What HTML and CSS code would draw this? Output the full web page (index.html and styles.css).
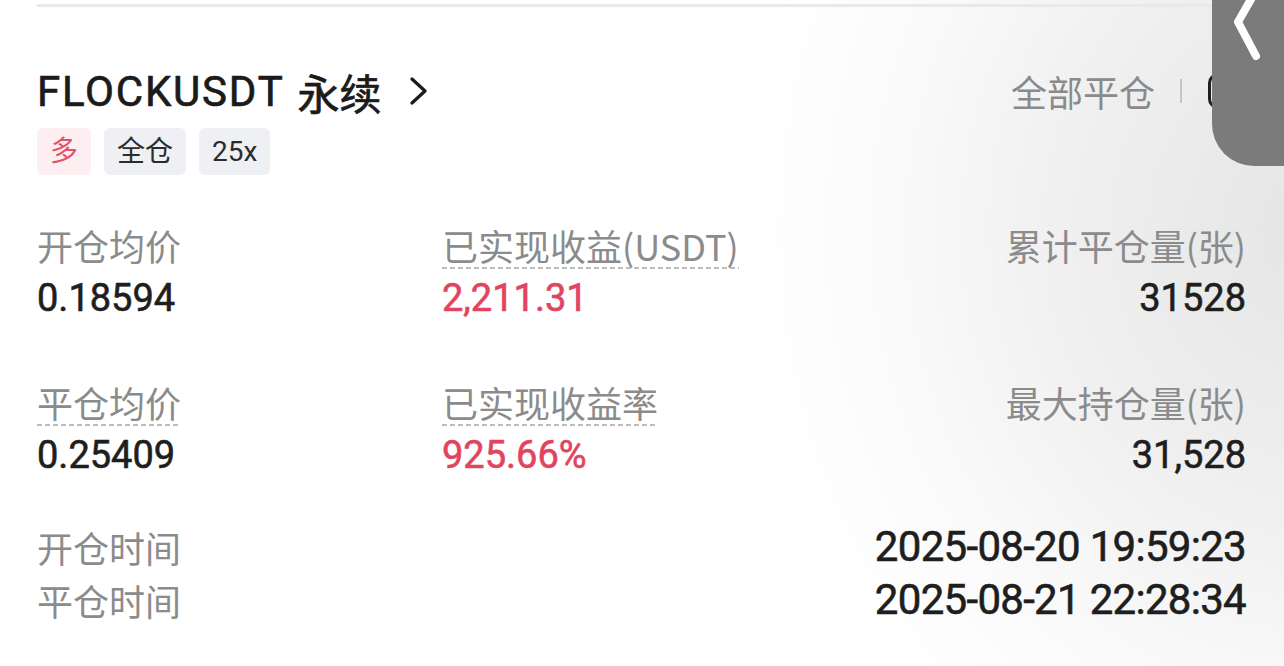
FILE: index.html
```html
<!DOCTYPE html>
<html>
<head>
    <title>FLOCKUSDT 永续</title>
    <meta charset="UTF-8">
    <meta name="viewport" content="width=device-width, initial-scale=1.0">
    <link rel="stylesheet" href="styles.css">
</head>
<body>
    <div class="back-tab">
        <svg width="72" height="70" viewBox="0 0 72 70">
            <polyline points="42,-6 26,22 44,56" fill="none" stroke="#fff" stroke-width="8" stroke-linecap="round" stroke-linejoin="round"/>
        </svg>
    </div>

    <main class="card">
        <div class="topline"></div>

        <header class="head">
            <div class="title">
                <span class="symbol">FLOCKUSDT</span>
                <span class="kind">永续</span>
                <svg class="arrow" width="22" height="28" viewBox="0 0 22 28">
                    <polyline points="4,2 17,14 4,26" fill="none" stroke="#1b1b1b" stroke-width="3.2" stroke-linecap="round" stroke-linejoin="round"/>
                </svg>
            </div>
            <div class="actions">
                <span class="close-all">全部平仓</span>
                <span class="sep"></span>
                <span class="share"></span>
            </div>
        </header>

        <div class="tags">
            <span class="tag tag-long">多</span>
            <span class="tag">全仓</span>
            <span class="tag">25x</span>
        </div>

        <section class="stats">
            <div class="stat">
                <span class="label">开仓均价</span>
                <span class="value">0.18594</span>
            </div>
            <div class="stat mid">
                <span class="label"><span class="dotted">已实现收益(USDT)</span></span>
                <span class="value red">2,211.31</span>
            </div>
            <div class="stat right">
                <span class="label">累计平仓量(张)</span>
                <span class="value">31528</span>
            </div>

            <div class="stat">
                <span class="label"><span class="dotted">平仓均价</span></span>
                <span class="value">0.25409</span>
            </div>
            <div class="stat mid">
                <span class="label"><span class="dotted">已实现收益率</span></span>
                <span class="value red">925.66%</span>
            </div>
            <div class="stat right">
                <span class="label">最大持仓量(张)</span>
                <span class="value">31,528</span>
            </div>
        </section>

        <section class="times">
            <div class="time-row">
                <span class="label">开仓时间</span>
                <span class="time">2025-08-20 19:59:23</span>
            </div>
            <div class="time-row">
                <span class="label">平仓时间</span>
                <span class="time">2025-08-21 22:28:34</span>
            </div>
        </section>
    </main>
</body>
</html>
```

FILE: styles.css
```css
body {
  margin: 0;
  height: 666px;
  overflow: hidden;
  font-family: Roboto, "Noto Sans CJK SC", sans-serif;
  color: #1e1e1e;
  background-color: #fff;
  background-image: radial-gradient(ellipse 560px 640px at 1310px 230px, #e5e5e5 0%, #f0f0f0 45%, #fafafa 75%, #ffffff 100%);
}

.card {
  padding: 0 38px 0 37px;
}

.topline {
  margin-top: 4px;
  height: 3px;
  background-color: #e8e9ed;
}

/* header */
.head {
  margin-top: 59px;
  display: flex;
  justify-content: space-between;
  align-items: center;
  height: 50px;
}

.title {
  display: flex;
  align-items: center;
  font-size: 42px;
  color: #1b1b1b;
  -webkit-text-stroke: 0.7px #1b1b1b;
}

.symbol {
  letter-spacing: 1.8px;
}

.kind {
  margin-left: 13px;
  font-family: "Noto Sans CJK SC", sans-serif;
}

.arrow {
  margin-left: 26px;
}

.actions {
  display: flex;
  align-items: center;
}

.close-all {
  font-family: "Noto Sans CJK SC", sans-serif;
  font-size: 36px;
  color: #8a8a8a;
}

.sep {
  width: 2px;
  height: 24px;
  margin: 0 26px 0 25px;
  background-color: #c6c6c6;
}

.share {
  width: 38px;
  height: 36px;
  box-sizing: border-box;
  border: 3px solid #1e1e1e;
  border-radius: 10px;
}

/* tags */
.tags {
  margin-top: 12px;
  display: flex;
  gap: 13px;
}

.tag {
  padding: 0 13px;
  height: 47px;
  line-height: 47px;
  font-size: 28px;
  border-radius: 6px;
  background-color: #eef0f4;
  color: #2c2c2c;
}

.tag-long {
  background-color: #fdeef1;
  color: #e2506a;
}

/* stats */
.stats {
  margin-top: 48px;
  display: grid;
  grid-template-columns: 405px 1fr 1fr;
  row-gap: 57px;
}

.stat {
  display: flex;
  flex-direction: column;
  gap: 6px;
}

.stat.right {
  align-items: flex-end;
}

.label {
  display: block;
  height: 44px;
  font-family: "Noto Sans CJK SC", sans-serif;
  font-size: 36px;
  line-height: 44px;
  color: #8b8b8b;
}

.dotted {
  display: inline-block;
  vertical-align: top;
  height: 46px;
  background: linear-gradient(to right, #bdbdbd 60%, transparent 0) left bottom / 8px 2px repeat-x;
}

.value {
  height: 50px;
  font-size: 38px;
  line-height: 50px;
  color: #1e1e1e;
  -webkit-text-stroke: 0.6px #1e1e1e;
}

.value.red {
  color: #e2445f;
  -webkit-text-stroke-color: #e2445f;
}

/* times */
.times {
  margin-top: 40px;
}

.time-row {
  display: flex;
  justify-content: space-between;
  align-items: center;
  height: 53px;
}

.time-row .label {
  height: auto;
}

.time {
  font-size: 42px;
  letter-spacing: -0.7px;
  color: #1e1e1e;
  -webkit-text-stroke: 0.6px #1e1e1e;
}

/* grey tab over the top right corner */
.back-tab {
  position: absolute;
  top: 0;
  left: 1212px;
  width: 72px;
  height: 166px;
  background-color: #7b7b7b;
  border-bottom-left-radius: 42px;
}
```
